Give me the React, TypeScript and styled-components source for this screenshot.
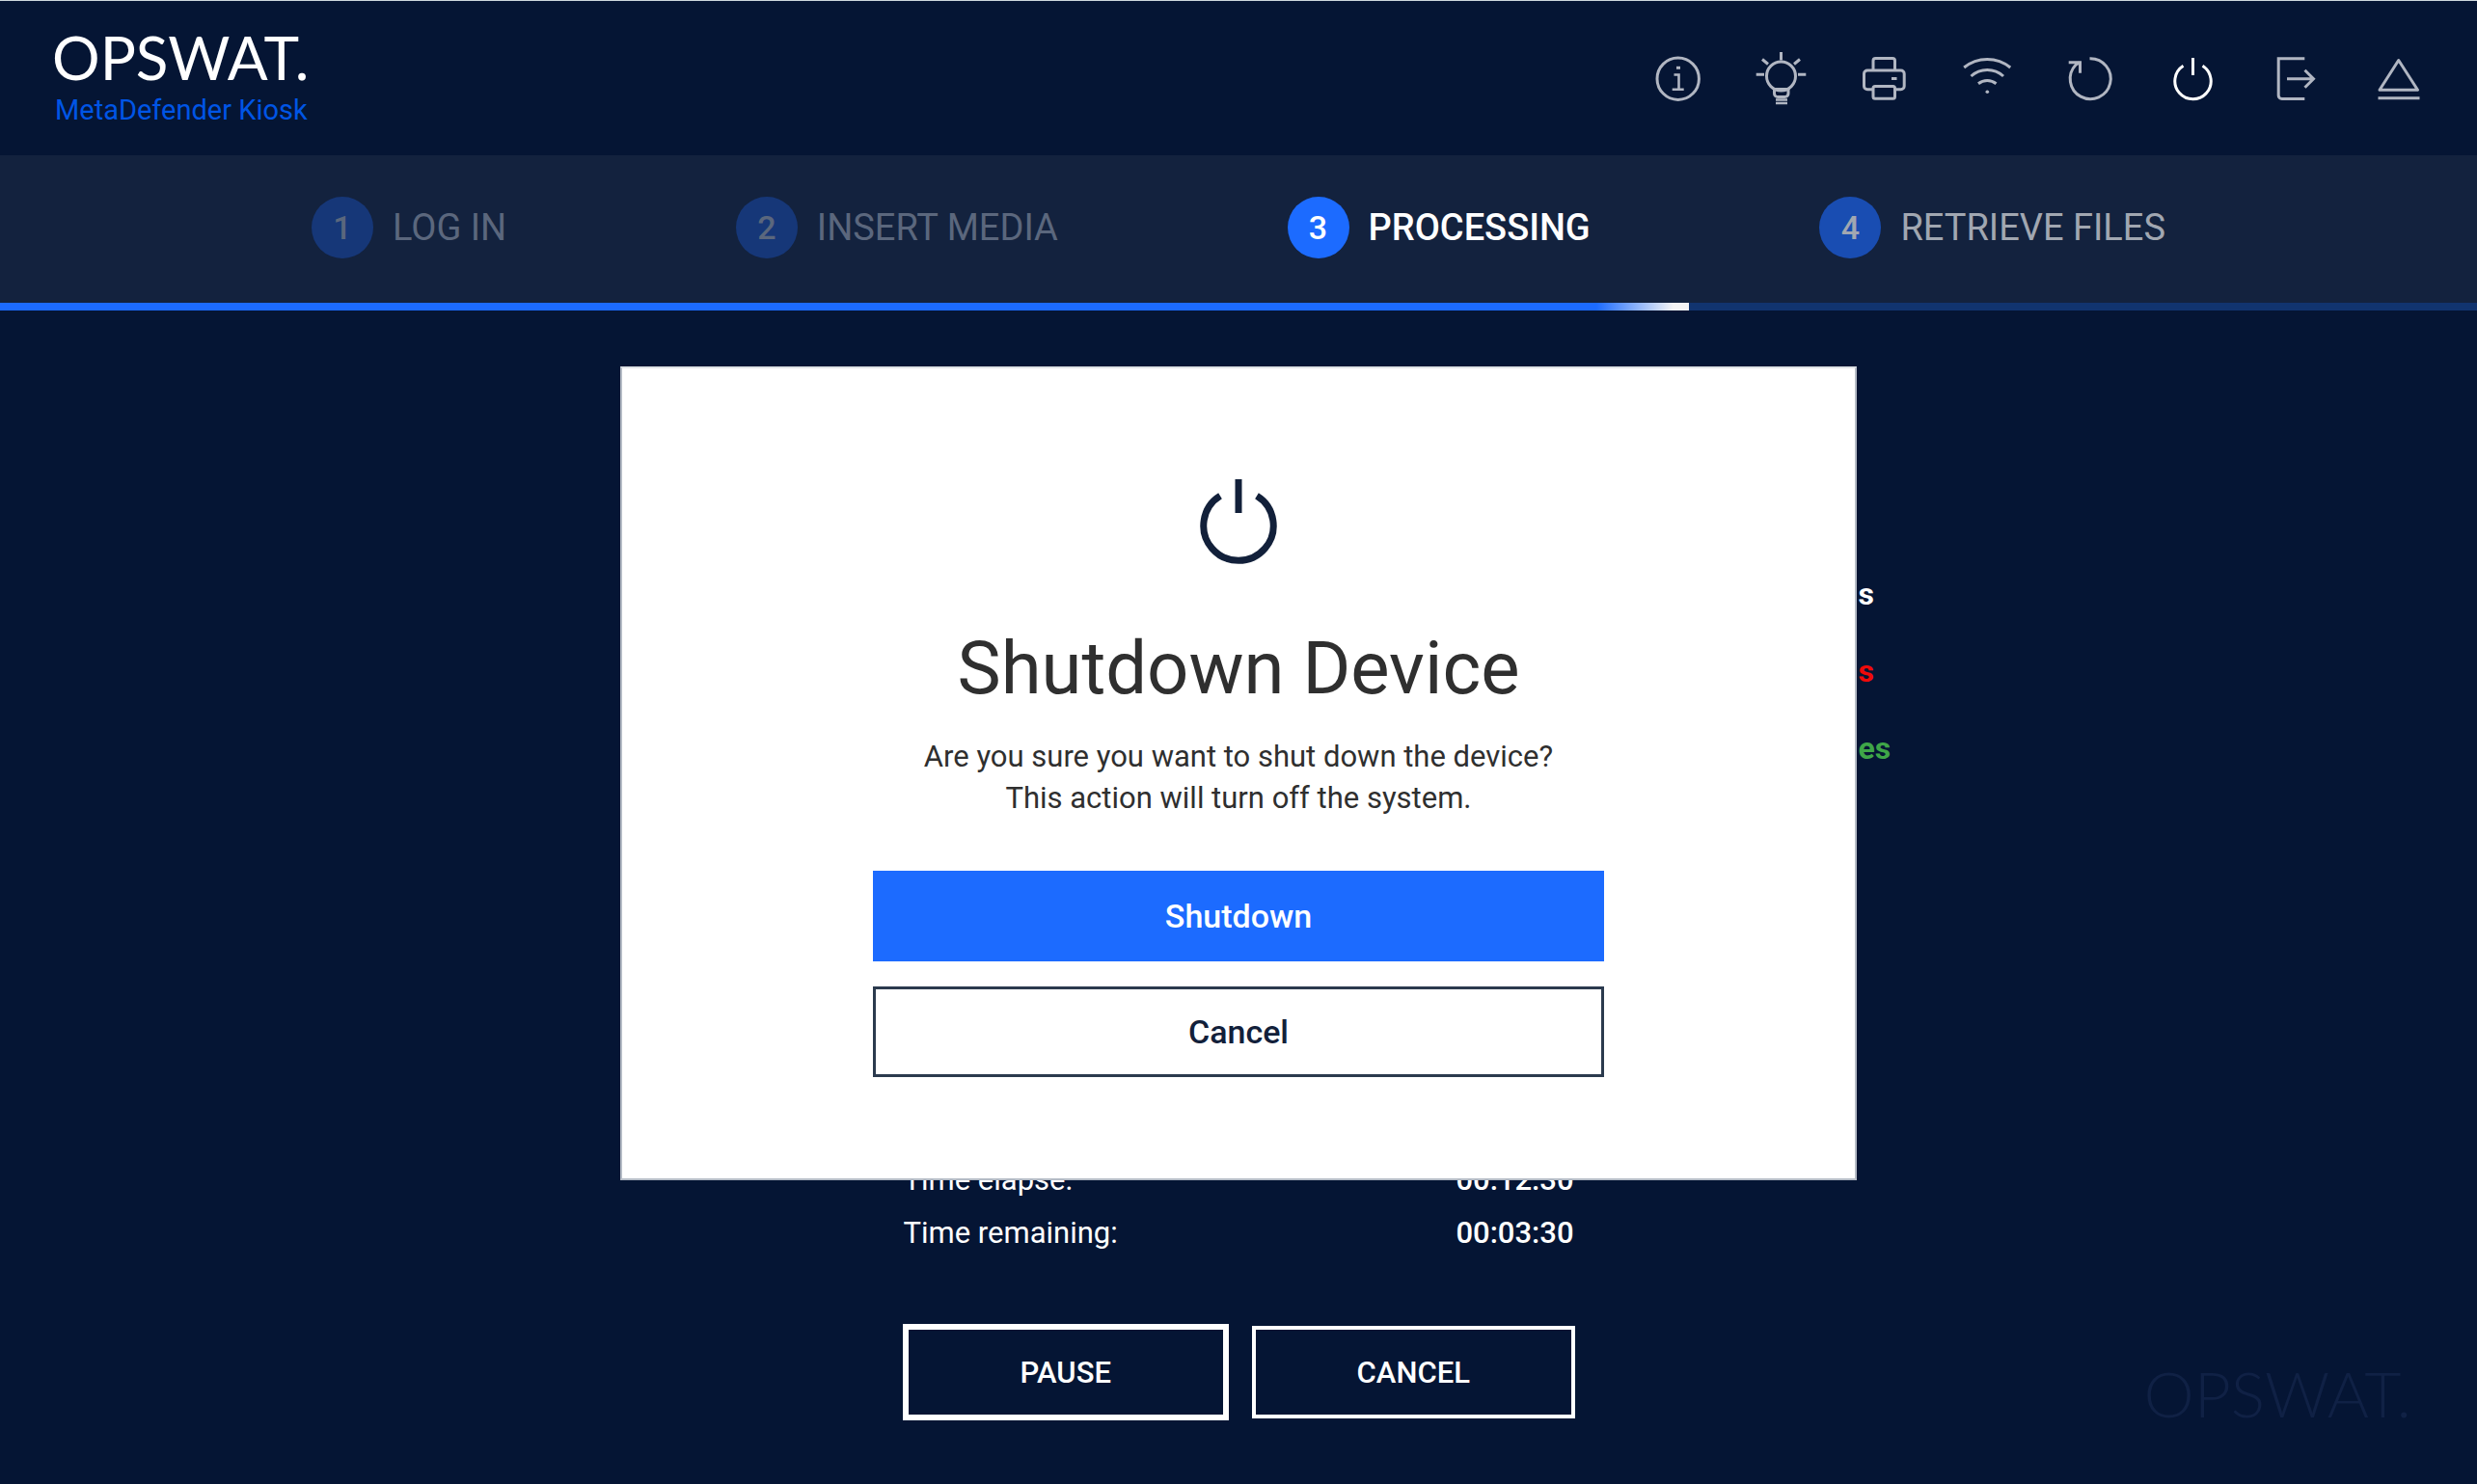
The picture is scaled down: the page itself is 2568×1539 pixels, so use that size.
import React from "react";
import styled, { createGlobalStyle } from "styled-components";

const color = {
  page: "#051534",
  bar: "#13223e",
  blue: "#1c6bff",
  brand: "#0055e6",
  icon: "#b1b6c2",
  white: "#ffffff",
  ink: "#2f2f2f",
  navy: "#12203a",
  red: "#f00a0a",
  green: "#3fa648",
};

const GlobalStyle = createGlobalStyle`
  *, *::before, *::after { box-sizing: border-box; }
  body {
    margin: 0;
    background: ${color.page};
    font-family: Roboto, "Liberation Sans", sans-serif;
  }
  button { font-family: inherit; cursor: pointer; }
`;

const Screen = styled.div`
  position: relative;
  display: flex;
  flex-direction: column;
  min-height: 100vh;
  border-top: 1px solid #cfd8de;
  color: ${color.white};
`;

const Header = styled.header`
  display: flex;
  align-items: flex-start;
  justify-content: space-between;
  height: 160px;
  padding: 22px 51px 0 54px;
`;

const Wordmark = styled.div<{ $faint?: boolean }>`
  font-family: Lato, "Open Sans", sans-serif;
  font-size: ${(p) => (p.$faint ? "66px" : "62px")};
  font-weight: ${(p) => (p.$faint ? 300 : 400)};
  line-height: ${(p) => (p.$faint ? "56px" : "72px")};
  color: ${(p) => (p.$faint ? "#102145" : color.white)};
`;

const Product = styled.div`
  padding-left: 3px;
  font-size: 29px;
  line-height: 38px;
  color: ${color.brand};
`;

const Tools = styled.nav`
  display: flex;
  gap: 51px;
  padding-top: 31px;
`;

const ToolButton = styled.button<{ $active?: boolean }>`
  display: block;
  width: 56px;
  height: 56px;
  padding: 0;
  border: 0;
  background: none;
  color: ${(p) => (p.$active ? color.white : color.icon)};
`;

const Glyph = styled.svg`
  display: block;
  fill: none;
  stroke: currentColor;
  stroke-width: 3;
`;

const Steps = styled.ol`
  display: flex;
  align-items: center;
  justify-content: space-between;
  height: 153px;
  margin: 0;
  padding: 0 323px 3px;
  list-style: none;
  background: ${color.bar};
`;

type StepState = "done" | "active" | "next";

const stepTone: Record<StepState, { disc: string; text: string }> = {
  done: { disc: "#163778", text: "#5b677d" },
  active: { disc: color.blue, text: color.white },
  next: { disc: "#194db2", text: "#a1a7b1" },
};

const Step = styled.li<{ $state: StepState }>`
  display: flex;
  align-items: center;
  gap: 20px;
  font-size: 38px;
  font-weight: ${(p) => (p.$state === "active" ? 500 : 400)};
  line-height: 44px;
  color: ${(p) => stepTone[p.$state].text};
`;

const StepNumber = styled.span<{ $state: StepState }>`
  display: flex;
  align-items: center;
  justify-content: center;
  width: 64px;
  height: 64px;
  border-radius: 50%;
  font-size: 34px;
  font-weight: 500;
  background: ${(p) => stepTone[p.$state].disc};
`;

const Track = styled.div`
  height: 8px;
  background: #11346f;
`;

const TrackFill = styled.div`
  height: 100%;
  background: linear-gradient(to right, ${color.blue} calc(100% - 96px), #f4f4f4 calc(100% - 16px));
`;

const Main = styled.main`
  flex: 1;
  display: grid;
  grid-template-columns: 1fr 697px 1fr;
  grid-template-rows: 1fr auto;
  padding-bottom: 66px;
`;

const Results = styled.ul`
  grid-column: 3;
  display: flex;
  flex-direction: column;
  margin: 0;
  padding: 254px 0 0 294px;
  list-style: none;
`;

const Result = styled.li<{ $tone: string }>`
  font-size: 32px;
  font-weight: 700;
  line-height: 80px;
  color: ${(p) => p.$tone};
`;

const Session = styled.section`
  grid-column: 2;
  grid-row: 2;
`;

const Times = styled.dl`
  margin: 0 0 67px;
`;

const TimeRow = styled.div`
  display: flex;
  justify-content: space-between;
  padding: 0 1px;
  font-size: 31px;
  line-height: 55px;

  dd { margin: 0; font-weight: 500; }
`;

const Actions = styled.div`
  display: flex;
  align-items: center;
  gap: 24px;
`;

const ActionButton = styled.button<{ $focused?: boolean }>`
  flex: 1;
  height: ${(p) => (p.$focused ? "100px" : "96px")};
  border: ${(p) => (p.$focused ? "6px" : "4px")} solid ${color.white};
  background: transparent;
  color: ${color.white};
  font-size: 31px;
  font-weight: 500;
`;

const Watermark = styled.div`
  grid-column: 3;
  grid-row: 2;
  align-self: end;
  justify-self: end;
  padding-right: 68px;
`;

const Dialog = styled.div`
  position: absolute;
  top: 379px;
  left: 50%;
  transform: translateX(-50%);
  display: flex;
  flex-direction: column;
  align-items: center;
  width: 1282px;
  padding: 115px 260px 105px;
  border: 2px solid #b5bcc6;
  border-top-color: #dfe2e6;
  background: ${color.white};
  color: ${color.ink};
`;

const DialogTitle = styled.h1`
  margin: 60px 0 22px;
  font-size: 76px;
  font-weight: 400;
  line-height: 96px;
`;

const DialogText = styled.p`
  margin: 0 0 54px;
  font-size: 31px;
  line-height: 43px;
  text-align: center;
`;

const DialogButtons = styled.div`
  display: flex;
  flex-direction: column;
  gap: 26px;
  width: 100%;
`;

const DialogButton = styled.button<{ $primary?: boolean }>`
  height: 94px;
  border: 3px solid ${(p) => (p.$primary ? color.blue : "#2b3a4e")};
  background: ${(p) => (p.$primary ? color.blue : color.white)};
  color: ${(p) => (p.$primary ? color.white : color.navy)};
  font-size: 34px;
  font-weight: 500;
`;

const PowerMark = styled(Glyph)`
  color: ${color.navy};
  stroke-width: 7;
`;

const tools: { label: string; active?: boolean; art: React.ReactNode }[] = [
  {
    label: "Information",
    art: (
      <>
        <circle cx="27.7" cy="27.7" r="21.7" />
        <path d="M23.5 23.5h5v15M21.7 38.7h12" strokeWidth="2.6" />
        <path d="M26 16.3h4" strokeWidth="3" />
      </>
    ),
  },
  {
    label: "Light",
    art: (
      <>
        <circle cx="27.5" cy="25" r="15" />
        <path d="M27.5 0v8.5M1.7 23.3h8.3M45 23.3h8.3M8 7.5l6 5M47 7.5l-6 5" />
        <path d="M20.5 38.5h14.5v4.5a3.5 3.5 0 0 1-3.5 3.5h-7.5a3.5 3.5 0 0 1-3.5-3.5z" />
        <path d="M22 49.5h12M22 53h12" strokeWidth="2.5" />
      </>
    ),
  },
  {
    label: "Print",
    art: (
      <>
        <path d="M16 19V9a2.5 2.5 0 0 1 2.5-2.5h17.5a2.5 2.5 0 0 1 2.5 2.5v10" />
        <path d="M16 38.8H10a3.5 3.5 0 0 1-3.5-3.5V22.5A3.5 3.5 0 0 1 10 19h34.7a3.5 3.5 0 0 1 3.5 3.5v12.8a3.5 3.5 0 0 1-3.5 3.5h-6.2" />
        <rect x="16" y="35.5" width="22.5" height="12.7" rx="2" />
        <path d="M35 27.5h5.5" />
      </>
    ),
  },
  {
    label: "Wi-Fi",
    art: (
      <>
        <path d="M3.2 16a38 38 0 0 1 48 0" />
        <path d="M10.5 25a25 25 0 0 1 33.5 0" />
        <path d="M18 32.8a15 15 0 0 1 18.5 0" />
        <circle cx="27.3" cy="41.2" r="1.8" fill="currentColor" stroke="none" />
      </>
    ),
  },
  {
    label: "Restart",
    art: (
      <>
        <path d="M26.5 6.7a21 21 0 1 1-14.5 6.5l4-2.5" />
        <path d="M4.7 10.8h11.8v11" />
      </>
    ),
  },
  {
    label: "Power",
    active: true,
    art: (
      <>
        <path d="M16.5 14.3a18.7 18.7 0 1 0 20 0" />
        <path d="M26.5 6v18" />
      </>
    ),
  },
  {
    label: "Log out",
    art: (
      <>
        <path d="M35.3 6.8H8.2v38.2a3.5 3.5 0 0 0 3.5 3.5h23.6" />
        <path d="M17 27.7h27M35.5 18.7l9 9-9 9" />
      </>
    ),
  },
  {
    label: "Eject",
    art: (
      <>
        <path d="M25.7 8.5L45.5 39.3H6z" strokeLinejoin="round" />
        <path d="M4.5 47.8h43" />
      </>
    ),
  },
];

const steps: { label: string; state: StepState }[] = [
  { label: "LOG IN", state: "done" },
  { label: "INSERT MEDIA", state: "done" },
  { label: "PROCESSING", state: "active" },
  { label: "RETRIEVE FILES", state: "next" },
];

const progress = 68.2;

export default function App() {
  return (
    <>
      <GlobalStyle />
      <Screen>
        <Header>
          <div>
            <Wordmark>OPSWAT.</Wordmark>
            <Product>MetaDefender Kiosk</Product>
          </div>
          <Tools>
            {tools.map((t) => (
              <ToolButton key={t.label} type="button" aria-label={t.label} $active={t.active}>
                <Glyph width="56" height="56" viewBox="0 0 56 56" aria-hidden="true">
                  {t.art}
                </Glyph>
              </ToolButton>
            ))}
          </Tools>
        </Header>

        <Steps>
          {steps.map((s, i) => (
            <Step key={s.label} $state={s.state}>
              <StepNumber $state={s.state}>{i + 1}</StepNumber>
              {s.label}
            </Step>
          ))}
        </Steps>
        <Track role="progressbar" aria-valuemin={0} aria-valuemax={100} aria-valuenow={progress}>
          <TrackFill style={{ width: `${progress}%` }} />
        </Track>

        <Main>
          <Results>
            <Result $tone={color.white}>s</Result>
            <Result $tone={color.red}>s</Result>
            <Result $tone={color.green}>es</Result>
          </Results>
          <Session>
            <Times>
              <TimeRow>
                <dt>Time elapse:</dt>
                <dd>00:12:30</dd>
              </TimeRow>
              <TimeRow>
                <dt>Time remaining:</dt>
                <dd>00:03:30</dd>
              </TimeRow>
            </Times>
            <Actions>
              <ActionButton type="button" $focused>
                PAUSE
              </ActionButton>
              <ActionButton type="button">CANCEL</ActionButton>
            </Actions>
          </Session>
          <Watermark>
            <Wordmark $faint>OPSWAT.</Wordmark>
          </Watermark>
        </Main>

        <Dialog role="dialog" aria-modal="true" aria-labelledby="dialog-title">
          <PowerMark width="80" height="88" viewBox="0 0 80 88" aria-hidden="true">
            <path d="M21 17.3a36.2 36.2 0 1 0 38 0" />
            <path d="M40 0v35" />
          </PowerMark>
          <DialogTitle id="dialog-title">Shutdown Device</DialogTitle>
          <DialogText>
            Are you sure you want to shut down the device?
            <br />
            This action will turn off the system.
          </DialogText>
          <DialogButtons>
            <DialogButton type="button" $primary>
              Shutdown
            </DialogButton>
            <DialogButton type="button">Cancel</DialogButton>
          </DialogButtons>
        </Dialog>
      </Screen>
    </>
  );
}
